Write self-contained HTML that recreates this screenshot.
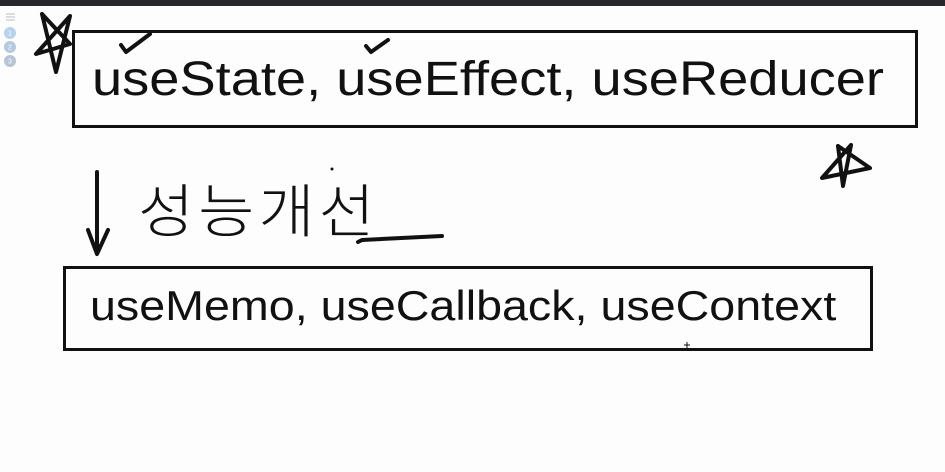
<!DOCTYPE html>
<html><head><meta charset="utf-8"><style>
html,body{margin:0;padding:0;width:945px;height:472px;overflow:hidden;background:#fdfdfd;font-family:"Liberation Sans",sans-serif;}
.top{position:absolute;left:0;top:0;width:945px;height:6px;background:#27272c;}
.box{position:absolute;border:3px solid #111;box-sizing:border-box;}
.t{position:absolute;white-space:nowrap;color:#111;transform-origin:left top;}
.ko{position:absolute;font-family:"Noto Sans CJK KR","NanumGothic",sans-serif;font-weight:300;font-size:58px;color:#111;left:138px;top:165px;letter-spacing:4px;transform:scaleX(1.05);transform-origin:left top;}
</style></head><body>
<div class="top"></div>
<svg style="position:absolute;left:0;top:0" width="945" height="472">
<g stroke="#b8bcc4" stroke-width="1"><line x1="6" y1="14" x2="15" y2="14"/><line x1="6" y1="17" x2="15" y2="17"/><line x1="6" y1="20" x2="15" y2="20"/></g>
<circle cx="10" cy="33" r="6" fill="#b7d2ee"/><circle cx="10" cy="47" r="6" fill="#b6c8de"/><circle cx="10" cy="61" r="6" fill="#b6c4d6"/>
<text x="10" y="35.5" font-size="7" fill="#fff" text-anchor="middle" font-family="Liberation Sans">1</text>
<text x="10" y="49.5" font-size="7" fill="#fff" text-anchor="middle" font-family="Liberation Sans">2</text>
<text x="10" y="63.5" font-size="7" fill="#fff" text-anchor="middle" font-family="Liberation Sans">3</text>
<g fill="none" stroke="#111" stroke-width="4" stroke-linecap="round" stroke-linejoin="round">
<path d="M42 14 L56 72 L70 16 L36 54 L70 44 L42 14"/>
<path d="M121 45 L126 52 L150 34"/>
<path d="M366 46 L371 52 L388 40"/>
<path d="M838 146 L843 186 L851 145 L822 178 L870 168 L838 146"/>
<path d="M97 172 L97 252 M88 230 L97 254 L108 230"/>
<path d="M358 242 L362 240 L442 236"/>
</g>
<circle cx="332" cy="169" r="1.5" fill="#111"/>
<path d="M684 345 L690 345 M687 342 L687 348" stroke="#111" stroke-width="1"/>
</svg>
<div class="box" style="left:72px;top:30px;width:846px;height:98px"></div>
<div class="t" style="left:92px;top:52px;font-size:48px;line-height:56px;transform:scaleX(1.13);">useState, useEffect, useReducer</div>
<div class="box" style="left:63px;top:266px;width:810px;height:85px"></div>
<div class="t" style="left:90px;top:282px;font-size:42px;line-height:48px;transform:scaleX(1.11);">useMemo, useCallback, useContext</div>
<div class="ko">성능개선</div>
</body></html>
